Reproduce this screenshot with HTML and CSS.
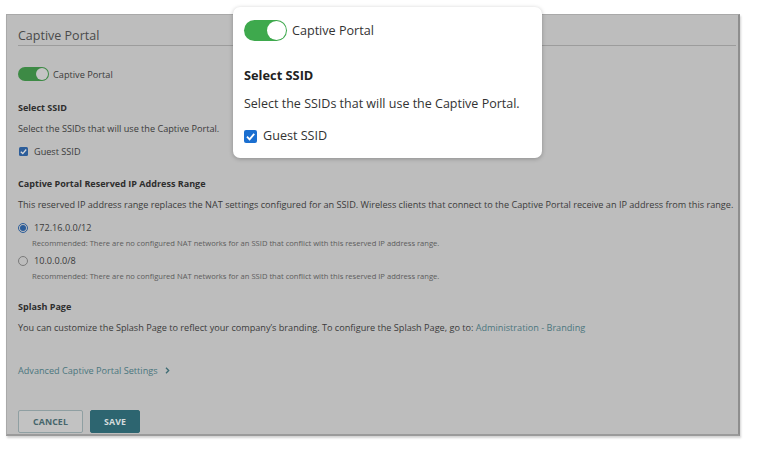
FILE: index.html
```html
<!DOCTYPE html>
<html>
<head>
<meta charset="utf-8">
<link rel="stylesheet" href="styles.css">
</head>
<body>
<div class="page">
  <section class="panel">
    <h2 class="title">Captive Portal</h2>
    <div class="toggle-row">
      <span class="toggle"><span class="knob"></span></span>
      <span class="toggle-label">Captive Portal</span>
    </div>
    <h3 class="heading h-ssid">Select SSID</h3>
    <p class="text t-gap">Select the SSIDs that will use the Captive Portal.</p>
    <label class="check-row r-gap"><span class="check"><svg viewBox="0 0 10 10" width="9" height="9"><path d="M2 5.2 L4.2 7.3 L8 2.8" fill="none" stroke="#d8d8d8" stroke-width="1.5"/></svg></span>Guest SSID</label>

    <h3 class="heading h-ip">Captive Portal Reserved IP Address Range</h3>
    <p class="text t-gap">This reserved IP address range replaces the NAT settings configured for an SSID. Wireless clients that connect to the Captive Portal receive an IP address from this range.</p>
    <label class="radio-row r-gap"><span class="radio on"><span class="dot"></span></span>172.16.0.0/12</label>
    <p class="note">Recommended: There are no configured NAT networks for an SSID that conflict with this reserved IP address range.</p>
    <label class="radio-row r2-gap"><span class="radio"></span>10.0.0.0/8</label>
    <p class="note">Recommended: There are no configured NAT networks for an SSID that conflict with this reserved IP address range.</p>

    <h3 class="heading h-splash">Splash Page</h3>
    <p class="text t-gap">You can customize the Splash Page to reflect your company’s branding. To configure the Splash Page, go to: <a class="link">Administration - Branding</a></p>

    <a class="advanced">Advanced Captive Portal Settings <span class="chev"><svg viewBox="0 0 6 8" width="5" height="7"><path d="M1.2 0.8 L4.4 4 L1.2 7.2" fill="none" stroke="#3e6c74" stroke-width="1.6"/></svg></span></a>

    <div class="actions">
      <button class="btn cancel">CANCEL</button>
      <button class="btn save">SAVE</button>
    </div>
  </section>

  <div class="popup">
    <div class="p-toggle-row">
      <span class="p-toggle"><span class="p-knob"></span></span>
      <span class="p-toggle-label">Captive Portal</span>
    </div>
    <h3 class="p-heading">Select SSID</h3>
    <p class="p-text">Select the SSIDs that will use the Captive Portal.</p>
    <label class="p-check-row"><span class="p-check"><svg viewBox="0 0 14 14" width="13" height="13"><path d="M3.2 7.2 L6 10 L11 4.2" fill="none" stroke="#fff" stroke-width="2"/></svg></span>Guest SSID</label>
  </div>
</div>
</body>
</html>
```

FILE: styles.css
```css
* { box-sizing: border-box; }
html, body { margin: 0; padding: 0; background: #fff; }
body {
  font-family: "Open Sans", "Liberation Sans", sans-serif;
  color: #353535;
  width: 766px;
  height: 450px;
  overflow: hidden;
}
.page { position: relative; padding: 14px 0 0 6px; }

.panel {
  width: 734px;
  height: 422px;
  background: #bdbdbd;
  border: 1px solid #a9a9a9;
  border-right: 2px solid #8e8e8e;
  border-bottom: 2px solid #9a9a9a;
  box-shadow: 1px 2px 2px rgba(0,0,0,0.18);
  padding: 12px 0 0 11px;
}
.title {
  margin: 0 2px 0 0;
  font-size: 12.5px;
  font-weight: 400;
  line-height: 18px;
  color: #4a4a4a;
  border-bottom: 1px solid #9c9c9c;
  padding-bottom: 0;
}
.toggle-row {
  display: flex;
  align-items: center;
  gap: 4px;
  margin-top: 21px;
  height: 14px;
}
.toggle {
  width: 31px;
  height: 14px;
  border-radius: 7px;
  background: #3d8a45;
  position: relative;
  flex: none;
}
.knob {
  position: absolute;
  right: 1px;
  top: 1px;
  width: 12px;
  height: 12px;
  border-radius: 50%;
  background: #c4c4c4;
}
.toggle-label { font-size: 9.2px; color: #3b3b3b; }

.heading {
  margin: 0;
  font-size: 9.05px;
  font-weight: 700;
  line-height: 13px;
  color: #2e2e2e;
}
.h-ssid { margin-top: 20px; }
.h-ip { margin-top: 19px; }
.h-splash { margin-top: 19px; }
.text {
  margin: 0;
  font-size: 9.15px;
  line-height: 13px;
  color: #3b3b3b;
  white-space: nowrap;
}
.t-gap { margin-top: 8px; }
.check-row, .radio-row {
  display: flex;
  align-items: center;
  gap: 6px;
  font-size: 9.15px;
  line-height: 13px;
  color: #3b3b3b;
}
.r-gap { margin-top: 10px; }
.r2-gap { margin-top: 6px; }
.check {
  width: 9px;
  height: 9px;
  border-radius: 1.5px;
  background: #2c5d9a;
  display: flex;
  align-items: center;
  justify-content: center;
  margin-left: 1px;
}
.check svg { display: block; }
.radio {
  width: 10px;
  height: 10px;
  border-radius: 50%;
  border: 1px solid #7a7a7a;
  display: flex;
  align-items: center;
  justify-content: center;
  flex: none;
}
.radio.on { border-color: #2c5d9a; }
.dot { width: 6px; height: 6px; border-radius: 50%; background: #2c5d9a; }
.note {
  margin: 4px 0 0 14px;
  font-size: 7.6px;
  line-height: 10px;
  color: #5c5c5c;
  white-space: nowrap;
}
.link { color: #4b767d; text-decoration: none; }
.advanced {
  display: flex;
  align-items: center;
  gap: 7px;
  margin-top: 30px;
  font-size: 9.15px;
  line-height: 13px;
  color: #4b767d;
}
.chev { display: flex; align-items: center; }
.chev svg { display: block; }
.actions {
  display: flex;
  gap: 7px;
  margin-top: 33px;
}
.btn {
  font-family: "Open Sans", "Liberation Sans", sans-serif;
  font-size: 8.8px;
  font-weight: 700;
  height: 23px;
  border-radius: 2px;
  padding: 0;
  letter-spacing: 0.1px;
}
.cancel {
  width: 65px;
  background: #c2c2c2;
  border: 1px solid #8f9fa2;
  color: #46666c;
}
.save {
  width: 50px;
  background: #2d6570;
  border: 1px solid #2d6570;
  color: #d6dcdd;
}

/* popup overlay */
.popup {
  position: absolute;
  left: 233px;
  top: 7px;
  width: 309px;
  height: 151px;
  background: #fff;
  border-radius: 7px;
  box-shadow: 0 1px 4px rgba(0,0,0,0.25);
  padding: 13px 0 0 11px;
  color: #2b2b2b;
}
.p-toggle-row {
  display: flex;
  align-items: center;
  gap: 5px;
  height: 21px;
}
.p-toggle {
  position: relative;
  width: 43px;
  height: 21px;
  border-radius: 11px;
  background: #3ea94d;
  flex: none;
}
.p-knob {
  position: absolute;
  right: 1px;
  top: 1px;
  width: 19px;
  height: 19px;
  border-radius: 50%;
  background: #fff;
}
.p-toggle-label { font-size: 12.6px; color: #333; }
.p-heading {
  margin: 25px 0 0;
  font-size: 12.8px;
  font-weight: 700;
  line-height: 18px;
  color: #222;
}
.p-text {
  margin: 11px 0 0;
  font-size: 12.5px;
  line-height: 18px;
  color: #333;
  white-space: nowrap;
}
.p-check-row {
  display: flex;
  align-items: center;
  gap: 6px;
  margin-top: 14px;
  font-size: 12.6px;
  line-height: 18px;
  color: #333;
}
.p-check {
  width: 13px;
  height: 13px;
  border-radius: 2px;
  background: #1b6fd0;
  display: flex;
  align-items: center;
  justify-content: center;
}
.p-check svg { display: block; }
```
